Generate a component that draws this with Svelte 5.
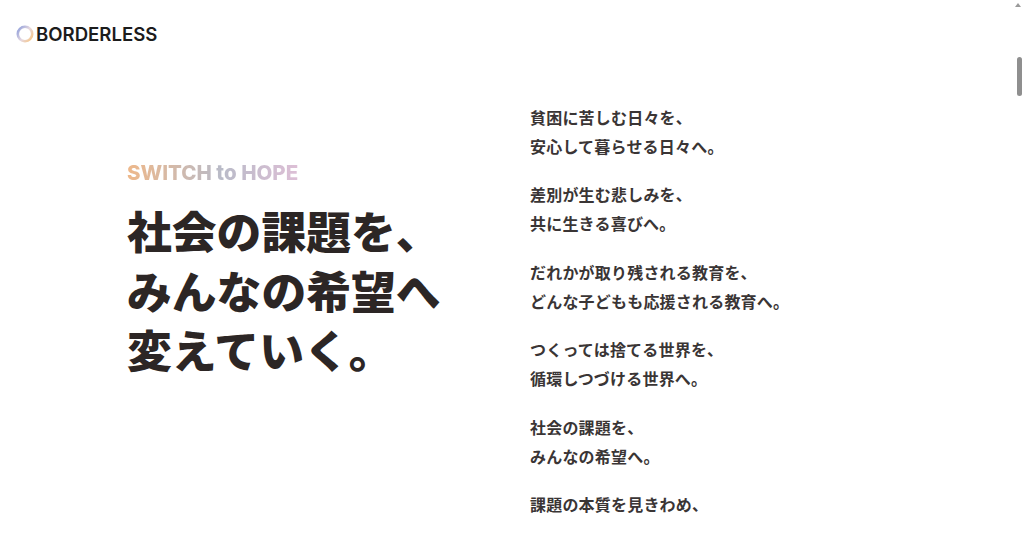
<script>
  const paragraphs = [
    ['貧困に苦しむ日々を、', '安心して暮らせる日々へ。'],
    ['差別が生む悲しみを、', '共に生きる喜びへ。'],
    ['だれかが取り残される教育を、', 'どんな子どもも応援される教育へ。'],
    ['つくっては捨てる世界を、', '循環しつづける世界へ。'],
    ['社会の課題を、', 'みんなの希望へ。'],
    ['課題の本質を見きわめ、']
  ];
</script>

<div class="page">
  <header class="header">
    <svg class="mark" viewBox="0 0 18 18" aria-hidden="true">
      <defs>
        <linearGradient id="ring" x1="0" y1="0.2" x2="1" y2="0.9">
          <stop offset="0" stop-color="#9aa6dc" />
          <stop offset="0.5" stop-color="#e6d8df" />
          <stop offset="1" stop-color="#f7c584" />
        </linearGradient>
      </defs>
      <circle cx="9" cy="9" r="7.2" fill="none" stroke="url(#ring)" stroke-width="2.6" />
    </svg>
    <span class="brand">BORDERLESS</span>
  </header>

  <main class="main">
    <section class="hero">
      <p class="tag">SWITCH to HOPE</p>
      <h1 class="title">社会の課題を、<br />みんなの希望へ<br />変えていく。</h1>
    </section>
    <section class="copy">
      {#each paragraphs as lines}
        <p class="para">
          {#each lines as line, i}
            {#if i > 0}<br />{/if}{line}
          {/each}
        </p>
      {/each}
    </section>
  </main>

  <div class="scroll-arrow"></div>
  <div class="scroll-thumb"></div>
</div>

<style>
  :global(body) {
    margin: 0;
    background: #fff;
    overflow: hidden;
  }
  .page {
    position: relative;
    width: 1024px;
    height: 550px;
    overflow: hidden;
    background: #fff;
    font-family: "Noto Sans CJK JP", "Noto Sans", sans-serif;
    color: #2e2a2a;
  }
  .header {
    display: flex;
    align-items: center;
    gap: 2px;
    height: 20px;
    padding: 24px 0 0 16px;
  }
  .mark {
    width: 18px;
    height: 18px;
    flex: none;
  }
  .brand {
    font-family: Inter, "Liberation Sans", sans-serif;
    font-size: 18.6px;
    font-weight: 600;
    color: #1c1c1c;
    line-height: 20px;
  }
  .main {
    display: flex;
    padding: 60px 0 0 127px;
  }
  .hero {
    width: 403px;
    flex: none;
    padding-top: 55px;
  }
  .tag {
    margin: 0;
    width: max-content;
    font-family: Inter, "Liberation Sans", sans-serif;
    font-size: 20.5px;
    font-weight: 800;
    line-height: 28px;
    background: linear-gradient(90deg, #eeb88a 0%, #b9bbc8 55%, #ddbfd6 100%);
    -webkit-background-clip: text;
    background-clip: text;
    color: transparent;
  }
  .title {
    margin: 13px 0 0;
    font-size: 44.8px;
    font-weight: 900;
    line-height: 59.5px;
    color: #2c2625;
  }
  .copy {
    display: flex;
    flex-direction: column;
    gap: 19.6px;
    margin-top: -1px;
  }
  .para {
    margin: 0;
    font-size: 16px;
    font-weight: 700;
    line-height: 28.9px;
    letter-spacing: 0.2px;
    color: #3a3535;
    white-space: nowrap;
  }
  .scroll-arrow {
    position: absolute;
    top: 3px;
    right: 3px;
    width: 0;
    height: 0;
    border-left: 3px solid transparent;
    border-right: 3px solid transparent;
    border-bottom: 4px solid #9a9a9a;
  }
  .scroll-thumb {
    position: absolute;
    top: 57px;
    right: 2px;
    width: 5px;
    height: 39px;
    border-radius: 3px;
    background: #8f8f8f;
  }
</style>
